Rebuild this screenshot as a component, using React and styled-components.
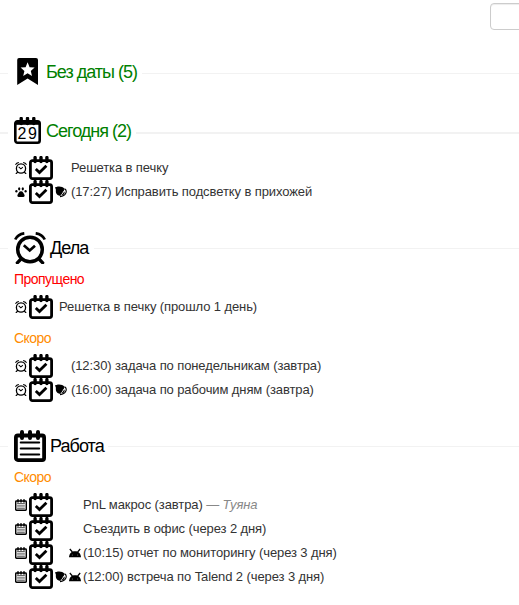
import React from "react";
import styled, { createGlobalStyle } from "styled-components";

const GlobalStyle = createGlobalStyle`
  body { margin: 0; background: #fff; overflow: hidden; }
  * { box-sizing: border-box; }
`;

const Page = styled.main`
  width: 100%;
  height: 605px;
  overflow: hidden;
  font-family: "Liberation Sans", Arial, sans-serif;
  font-size: 13px;
  color: #333;
`;
const TopBar = styled.header`
  height: 58px;
  padding: 3px 0 0 490px;
  overflow: hidden;
`;
const SearchInput = styled.input`
  display: block;
  width: 120px;
  height: 27px;
  border: 1px solid #ccc;
  border-radius: 4px;
  box-shadow: inset 0 1px 1px rgba(0, 0, 0, 0.075);
  background: #fff;
  outline: none;
`;
const Group = styled.section`
  padding-bottom: ${(p) => p.$after}px;
`;
const Heading = styled.h2`
  display: flex;
  align-items: center;
  height: ${(p) => p.$size}px;
  margin: 0;
  font-size: 18px;
  font-weight: 400;
  line-height: 20px;
  letter-spacing: ${(p) => p.$spacing}px;
  color: ${(p) => p.$color};
`;
const Rule = styled.span`
  flex: ${(p) => (p.$lead ? "0 0 8px" : "1")};
  height: ${(p) => p.$weight}px;
  margin-top: ${(p) => p.$shift}px;
  background: #f2f2f2;
`;
const HeadingIcon = styled.span`
  display: flex;
  margin: 0 4px 0 6px;
`;
const HeadingText = styled.span`
  width: ${(p) => p.$width}px;
  white-space: nowrap;
`;
const Status = styled.h3`
  height: 31px;
  margin: ${(p) => p.$before || 0}px 0 0;
  padding-left: 14px;
  font-size: 14px;
  font-weight: 400;
  line-height: 31px;
  letter-spacing: -0.53px;
  color: ${(p) => p.$color};
`;
const List = styled.ul`
  margin: 0;
  padding: ${(p) => p.$before || 0}px 0 0 15px;
  list-style: none;
`;
const Task = styled.li`
  display: flex;
  align-items: center;
  height: 24px;
  white-space: nowrap;
`;
const SmallSlot = styled.span`
  display: flex;
  width: ${(p) => p.$width || 12}px;
  height: 12px;
`;
const DoneButton = styled.button`
  display: flex;
  width: 24px;
  height: 24px;
  margin: 0 2px;
  padding: 0;
  border: 0;
  background: none;
`;
const TaskText = styled.span`
  line-height: 24px;
  letter-spacing: -0.1px;
`;
const Person = styled.em`
  color: #888;
`;
const DateDigits = styled.text`
  font: 16px "Liberation Sans", Arial, sans-serif;
  letter-spacing: 0;
`;

function BookmarkIcon() {
  return (
    <svg width="28" height="28" viewBox="0 0 28 28">
      <path d="M5 0h17q2 0 2 2v25l-10.400-6.500L3.200 27V2q0-2 1.800-2z" />
      <path fill="#fff" d="M13.600 4.300l2 4.900 5 .4-3.800 3.400 1.200 5-4.400-2.700-4.400 2.700 1.200-5-3.800-3.400 5-.4z" />
    </svg>
  );
}
function DateIcon() {
  return (
    <svg width="28" height="28" viewBox="0 0 28 28">
      <rect x="1.300" y="4.300" width="24.400" height="21.400" rx="2.200" fill="none" stroke="#000" strokeWidth="2.600" />
      <path d="M1 4h25v3.800H1z" />
      <path d="M7.200 1.500v5M13.500 1.500v5M19.800 1.500v5" stroke="#000" strokeWidth="3.400" strokeLinecap="round" />
      <DateDigits x="3.600" y="22">2</DateDigits>
      <DateDigits x="14.100" y="22">9</DateDigits>
    </svg>
  );
}
function AlarmIcon({ size }) {
  return (
    <svg width={size} height={size} viewBox="0 0 32 32" fill="none" stroke="#000">
      <circle cx="16" cy="17.500" r="12.300" strokeWidth="3.500" />
      <path d="M1.200 7.500C3 4 6 1.800 10.300 1.300M30.800 7.500C29 4 26 1.800 21.700 1.300" strokeWidth="2.700" />
      <path d="M6.500 27.500l-3.200 3.300M25.500 27.500l3.200 3.300" strokeWidth="3.300" strokeLinecap="round" />
      <path d="M9.800 13.200l5.900 5.200 5.300-4.700" strokeWidth="2.700" />
    </svg>
  );
}
function NotebookIcon({ size }) {
  return (
    <svg width={size} height={size} viewBox="0 0 32 32">
      <rect x="1.900" y="5.500" width="28.200" height="24.600" rx="2" fill="none" stroke="#000" strokeWidth="3.800" />
      <path d="M8 2v6M16 2v6M24 2v6" stroke="#000" strokeWidth="4" strokeLinecap="round" />
      <path d="M6.700 12.500h18.500M6.700 18.500h18.500M6.700 24.500h18.500" stroke="#000" strokeWidth="2" strokeLinecap="round" />
    </svg>
  );
}
function CheckIcon() {
  return (
    <svg width="24" height="24" viewBox="0 0 24 24">
      <rect x="1.400" y="4.600" width="21.200" height="18" rx="2" fill="none" stroke="#000" strokeWidth="2.800" />
      <path d="M6.100 1.600v4M12 1.600v4M17.900 1.600v4" stroke="#000" strokeWidth="3.400" strokeLinecap="round" />
      <path d="M6.800 12.900l3.700 3.600 6.900-6.700" fill="none" stroke="#000" strokeWidth="2.800" />
    </svg>
  );
}
function PawIcon() {
  return (
    <svg width="12" height="12" viewBox="0 0 12 12">
      <ellipse cx="1.400" cy="5.300" rx="1.100" ry="1.300" />
      <ellipse cx="4.200" cy="2.800" rx="1.100" ry="1.600" />
      <ellipse cx="7.800" cy="2.800" rx="1.100" ry="1.600" />
      <ellipse cx="10.600" cy="5.300" rx="1.100" ry="1.300" />
      <path d="M6 5.200C4 5.200 3.500 7.300 2.700 8.500 1.800 10 2.800 11.300 4.200 11h3.600c1.400.3 2.400-1 1.500-2.500C8.500 7.300 8 5.200 6 5.200z" />
    </svg>
  );
}
function BellIcon() {
  return (
    <svg width="12" height="12" viewBox="0 0 12 12">
      <path d="M0 1.300L1.500 1C4 0 7.800.6 9.500 2.700L5 9.800C2.200 9.200.4 7.400.9 3.700z" />
      <path d="M10 3c2.400 2 1.300 7-5 7.600" fill="none" stroke="#000" strokeWidth="1.100" />
      <path d="M5 9.800l4.500-7.100" stroke="#000" strokeWidth="1" />
      <path d="M9.400 5.500c.9 2-.8 3.900-3 4z" />
    </svg>
  );
}
function AndroidIcon() {
  return (
    <svg width="12" height="12" viewBox="0 0 12 12">
      <path d="M.8 2l2.600 3M11.200 2L8.600 5" stroke="#000" strokeWidth="1.200" />
      <path d="M0 10.200C.4 6 2.700 4.200 6 4.200s5.600 1.800 6 6z" />
      <circle cx="3.300" cy="7.900" r=".5" fill="#888" />
      <circle cx="8.700" cy="7.900" r=".5" fill="#888" />
    </svg>
  );
}

const smallIcons = {
  alarm: <AlarmIcon size={12} />,
  notebook: <NotebookIcon size={12} />,
  paw: <PawIcon />,
};

function GroupHeading({ icon, size = 28, color = "#000", spacing, width, weight = 1, shift, children }) {
  return (
    <Heading $size={size} $color={color} $spacing={spacing}>
      <Rule $lead $weight={weight} $shift={shift} />
      <HeadingIcon>{icon}</HeadingIcon>
      <HeadingText $width={width}>{children}</HeadingText>
      <Rule $weight={weight} $shift={shift} />
    </Heading>
  );
}

function TaskRow({ icon, bell, android, bellWidth = 14, tagWidth = 0, person, children }) {
  return (
    <Task>
      <SmallSlot>{smallIcons[icon]}</SmallSlot>
      <DoneButton aria-label="Готово"><CheckIcon /></DoneButton>
      <SmallSlot $width={bellWidth}>{bell && <BellIcon />}</SmallSlot>
      {tagWidth > 0 && <SmallSlot $width={tagWidth}>{android && <AndroidIcon />}</SmallSlot>}
      <TaskText>
        {children}
        {person && <Person> — {person}</Person>}
      </TaskText>
    </Task>
  );
}

export default function App() {
  return (
    <>
      <GlobalStyle />
      <Page>
        <TopBar><SearchInput aria-label="Поиск" /></TopBar>
        <Group $after={31}>
          <GroupHeading icon={<BookmarkIcon />} color="#008000" spacing={-1} width={96} shift={3}>Без даты (5)</GroupHeading>
        </Group>
        <Group $after={28}>
          <GroupHeading icon={<DateIcon />} color="#008000" spacing={-1} width={90} weight={2} shift={4}>Сегодня (2)</GroupHeading>
          <List $before={11}>
            <TaskRow icon="alarm" bellWidth={16}>Решетка в печку</TaskRow>
            <TaskRow icon="paw" bell bellWidth={16}>(17:27) Исправить подсветку в прихожей</TaskRow>
          </List>
        </Group>
        <Group $after={28}>
          <GroupHeading icon={<AlarmIcon size={32} />} size={32} spacing={-0.95} width={44} shift={1}>Дела</GroupHeading>
          <Status $color="#f00">Пропущено</Status>
          <List><TaskRow icon="alarm" bellWidth={4}>Решетка в печку (прошло 1 день)</TaskRow></List>
          <Status $color="#ff8c00" $before={4}>Скоро</Status>
          <List>
            <TaskRow icon="alarm" bellWidth={16}>(12:30) задача по понедельникам (завтра)</TaskRow>
            <TaskRow icon="alarm" bell bellWidth={16}>(16:00) задача по рабочим дням (завтра)</TaskRow>
          </List>
        </Group>
        <Group $after={0}>
          <GroupHeading icon={<NotebookIcon size={32} />} size={32} spacing={-0.95} width={58} shift={1}>Работа</GroupHeading>
          <Status $color="#ff8c00">Скоро</Status>
          <List>
            <TaskRow icon="notebook" tagWidth={14} person="Туяна">PnL макрос (завтра)</TaskRow>
            <TaskRow icon="notebook" tagWidth={14}>Съездить в офис (через 2 дня)</TaskRow>
            <TaskRow icon="notebook" android tagWidth={14}>(10:15) отчет по мониторингу (через 3 дня)</TaskRow>
            <TaskRow icon="notebook" bell android tagWidth={14}>(12:00) встреча по Talend 2 (через 3 дня)</TaskRow>
          </List>
        </Group>
      </Page>
    </>
  );
}
